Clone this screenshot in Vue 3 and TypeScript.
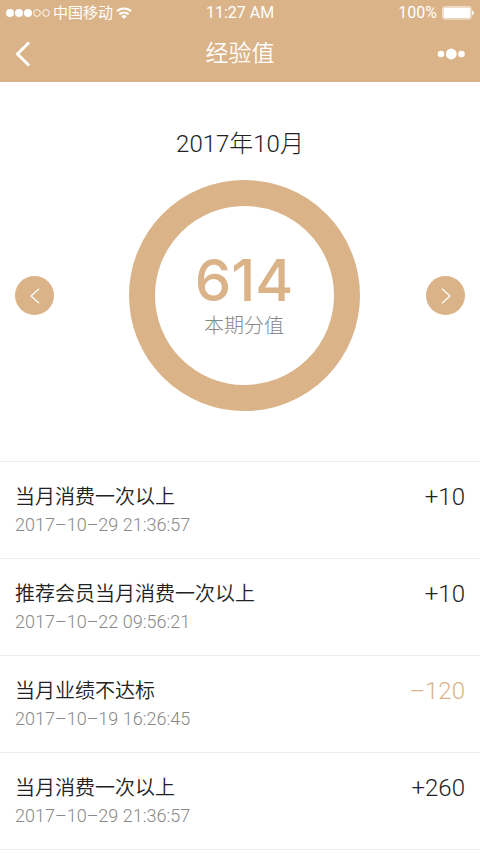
<script setup lang="ts">
import { computed, ref } from 'vue'

interface ScoreRecord {
  id: number
  title: string
  time: string
  score: number
}

interface Period {
  label: string
  total: number
}

const period = ref<Period>({ label: '2017年10月', total: 614 })

const records = ref<ScoreRecord[]>([
  { id: 1, title: '当月消费一次以上', time: '2017–10–29 21:36:57', score: 10 },
  { id: 2, title: '推荐会员当月消费一次以上', time: '2017–10–22 09:56:21', score: 10 },
  { id: 3, title: '当月业绩不达标', time: '2017–10–19 16:26:45', score: -120 },
  { id: 4, title: '当月消费一次以上', time: '2017–10–29 21:36:57', score: 260 },
])

const rows = computed(() =>
  records.value.map((r) => ({
    ...r,
    negative: r.score < 0,
    text: (r.score < 0 ? '–' : '+') + Math.abs(r.score),
  })),
)
</script>

<template>
  <div class="page">
    <header class="top">
      <div class="status">
        <div class="status-left">
          <svg class="signal" width="44" height="10" viewBox="0 0 44 10">
            <circle cx="4" cy="5" r="4" fill="#fff" />
            <circle cx="13" cy="5" r="4" fill="#fff" />
            <circle cx="22" cy="5" r="4" fill="#fff" />
            <circle cx="31" cy="5" r="3.4" fill="none" stroke="#fff" stroke-width="0.9" />
            <circle cx="40" cy="5" r="3.4" fill="none" stroke="#fff" stroke-width="0.9" />
          </svg>
          <span class="carrier">中国移动</span>
          <svg width="16" height="12" viewBox="0 0 16 12">
            <g fill="none" stroke="#fff" stroke-width="2">
              <path d="M0.8 4.4 A10.3 10.3 0 0 1 15.2 4.4" />
              <path d="M3.4 7.3 A6.5 6.5 0 0 1 12.6 7.3" />
            </g>
            <path d="M8 11.9 L5.3 9.3 A3.8 3.8 0 0 1 10.7 9.3 Z" fill="#fff" />
          </svg>
        </div>
        <span class="clock">11:27 AM</span>
        <div class="status-right">
          <span>100%</span>
          <svg width="32" height="14" viewBox="0 0 32 14">
            <rect x="0.6" y="0.6" width="28.6" height="12.6" rx="2.4" fill="#fff" fill-opacity="0.35" stroke="#fff" stroke-opacity="0.5" />
            <rect x="1.6" y="1.8" width="26.6" height="10.2" rx="1" fill="#fff" />
            <path d="M30 4.6 Q31.8 5.2 31.8 6.9 Q31.8 8.6 30 9.2 Z" fill="#fff" />
          </svg>
        </div>
      </div>
      <nav class="nav">
        <button class="icon-btn back" type="button" aria-label="返回">
          <svg width="16" height="26" viewBox="0 0 16 26">
            <path d="M14 1.5 L2.5 13 L14 24.5" fill="none" stroke="#fff" stroke-width="3" />
          </svg>
        </button>
        <h1 class="title">经验值</h1>
        <button class="icon-btn more" type="button" aria-label="更多">
          <svg width="28" height="12" viewBox="0 0 28 12">
            <circle cx="4" cy="6" r="3.3" fill="#fff" />
            <circle cx="14.3" cy="6" r="5.4" fill="#fff" />
            <circle cx="24.5" cy="6" r="3.3" fill="#fff" />
          </svg>
        </button>
      </nav>
    </header>

    <section class="summary">
      <h2 class="month">{{ period.label }}</h2>
      <div class="dial">
        <button class="step" type="button" aria-label="上个月">
          <svg width="10" height="16" viewBox="0 0 10 16">
            <path d="M9 0.7 L1 8 L9 15.3" fill="none" stroke="#fff" stroke-width="1.2" />
          </svg>
        </button>
        <div class="ring">
          <strong class="total">{{ period.total }}</strong>
          <span class="caption">本期分值</span>
        </div>
        <button class="step" type="button" aria-label="下个月">
          <svg width="10" height="16" viewBox="0 0 10 16">
            <path d="M1 0.7 L9 8 L1 15.3" fill="none" stroke="#fff" stroke-width="1.2" />
          </svg>
        </button>
      </div>
    </section>

    <ul class="list">
      <li v-for="row in rows" :key="row.id" class="row">
        <div class="info">
          <span class="name">{{ row.title }}</span>
          <time class="time">{{ row.time }}</time>
        </div>
        <span class="score" :class="{ negative: row.negative }">{{ row.text }}</span>
      </li>
    </ul>
  </div>
</template>

<style>
body {
  margin: 0;
  background: #fff;
}
</style>

<style scoped>
.page {
  font-family: Roboto, 'Noto Sans CJK SC', sans-serif;
  font-weight: 300;
  color: #222;
  background: #fff;
}

.top {
  background: #dab488;
  color: #fff;
}

.status {
  display: grid;
  grid-template-columns: 1fr auto 1fr;
  align-items: center;
  height: 26px;
  padding: 0 6px;
  font-size: 16px;
  font-weight: 400;
  line-height: 26px;
}

.status-left,
.status-right {
  display: flex;
  align-items: center;
}

.status-left {
  gap: 3px;
}

.status-right {
  justify-content: flex-end;
  gap: 5px;
}

.carrier {
  font-size: 15px;
}

.nav {
  display: grid;
  grid-template-columns: 1fr auto 1fr;
  align-items: center;
  height: 56px;
  padding: 0 15px;
}

.icon-btn {
  display: flex;
  padding: 0;
  border: 0;
  background: none;
  cursor: pointer;
}

.back {
  justify-self: start;
}

.more {
  justify-self: end;
}

.title {
  margin: 0;
  font-size: 23px;
  font-weight: 350;
  line-height: 32px;
}

.summary {
  padding: 46px 15px 50px;
}

.month {
  margin: 0;
  font-size: 24px;
  font-weight: 300;
  line-height: 32px;
  text-align: center;
}

.dial {
  display: flex;
  align-items: center;
  justify-content: space-between;
  margin-top: 20px;
}

.step {
  display: flex;
  align-items: center;
  justify-content: center;
  width: 39px;
  height: 39px;
  padding: 0;
  border: 0;
  border-radius: 50%;
  background: #dab488;
  cursor: pointer;
}

.ring {
  display: flex;
  flex-direction: column;
  align-items: center;
  justify-content: center;
  box-sizing: border-box;
  width: 231px;
  height: 231px;
  margin-left: 8px;
  padding-bottom: 4px;
  border: 26px solid #dab488;
  border-radius: 50%;
}

.total {
  font-family: Inter, sans-serif;
  font-size: 58px;
  font-weight: 500;
  line-height: 64px;
  color: #dab488;
}

.caption {
  font-size: 20px;
  line-height: 28px;
  color: #888;
}

.list {
  margin: 0;
  padding: 0;
  list-style: none;
  border-top: 1px solid #ececec;
}

.row {
  display: flex;
  justify-content: space-between;
  padding: 20px 15px;
  border-bottom: 1px solid #ececec;
}

.info {
  display: flex;
  flex-direction: column;
}

.name {
  font-size: 20px;
  font-weight: 350;
  line-height: 30px;
}

.time {
  font-size: 18px;
  line-height: 26px;
  color: #888;
}

.score {
  font-size: 24px;
  line-height: 30px;
}

.negative {
  color: #dab488;
}
</style>
